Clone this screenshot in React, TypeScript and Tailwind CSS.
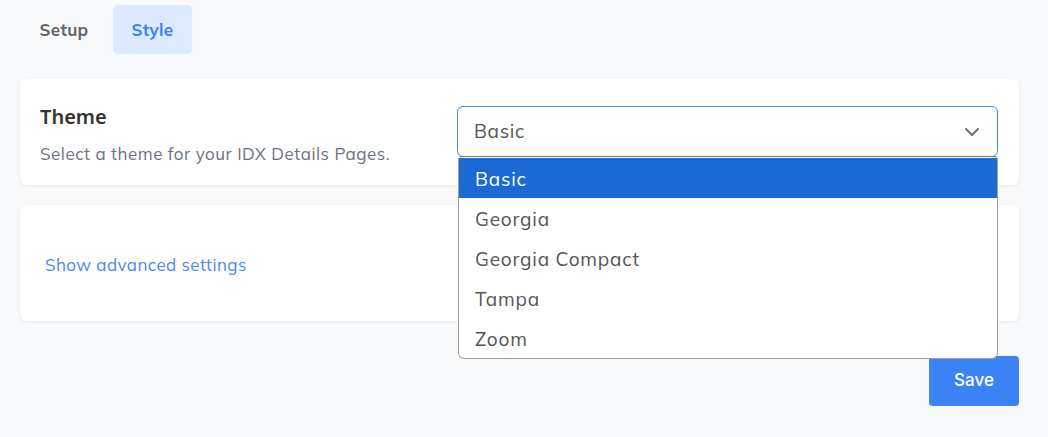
import React from "react";

const muli = { fontFamily: '"Mulish", "Muli", "Open Sans", sans-serif' };

export default function App() {
  const options = ["Basic", "Georgia", "Georgia Compact", "Tampa", "Zoom"];
  return (
    <div className="w-[1048px] h-[437px] bg-[#f8f9fb] overflow-hidden" style={muli}>
      <div className="flex gap-[5px] pl-[20px] pt-[5px]">
        <div className="h-[49px] w-[88px] flex items-center justify-center text-[17px] font-bold text-[#5f6368] tracking-[0.3px] rounded-[5px]">
          Setup
        </div>
        <div className="h-[49px] w-[79px] flex items-center justify-center text-[17px] font-bold text-[#3b82f6] tracking-[0.3px] bg-[#dbeafe] rounded-[5px]">
          Style
        </div>
      </div>

      <div className="ml-[20px] mr-[29px] mt-[25px] bg-white rounded-[6px] shadow-[0_1px_3px_rgba(0,0,0,0.08)] h-[106px] flex pl-[20px] pr-[21px] pt-[27px]">
        <div className="flex-1">
          <div className="text-[20px] font-semibold text-[#333333] leading-[24px] -mt-[1px]" style={{ fontFamily: '"Noto Sans", sans-serif' }}>
            Theme
          </div>
          <div className="mt-[14px] text-[17px] text-[#6b7280] leading-[22px] tracking-[0.5px]">
            Select a theme for your IDX Details Pages.
          </div>
        </div>
        <div className="relative w-[541px]">
          <div className="h-[51px] border border-[#4a90c8] rounded-[6px] flex items-center justify-between pl-[16px] pr-[17px] text-[19px] text-[#555555] tracking-[0.7px]">
            <span>Basic</span>
            <svg width="16" height="10" viewBox="0 0 16 10" fill="none">
              <path d="M2 2l6 6 6-6" stroke="#6b7280" strokeWidth="2" strokeLinecap="round" strokeLinejoin="round" />
            </svg>
          </div>
          <div className="absolute left-[1px] top-[50px] w-[540px] bg-white border border-[#a0a0a0] border-t-[#777777] rounded-b-[6px] rounded-t-[4px] overflow-hidden z-10 pt-[1px]">
            {options.map((o, i) => (
              <div
                key={o}
                className={
                  i === 0
                    ? "h-[40px] flex items-center pl-[16px] pt-[2px] text-[19px] tracking-[0.8px] bg-[#1a69d4] text-white"
                    : "h-[40px] flex items-center pl-[16px] pt-[2px] text-[19px] tracking-[0.8px] text-[#555555]"
                }
              >
                {o}
              </div>
            ))}
          </div>
        </div>
      </div>

      <div className="ml-[20px] mr-[29px] mt-[20px] bg-white rounded-[6px] shadow-[0_1px_3px_rgba(0,0,0,0.08)] h-[116px] flex items-center pl-[25px] pt-[3px]">
        <span className="text-[17px] text-[#4f86f7] tracking-[0.4px]">Show advanced settings</span>
      </div>

      <div className="flex justify-end pr-[29px] mt-[35px]">
        <button className="w-[90px] h-[50px] bg-[#3b82f6] rounded-[4px] text-white text-[17px] font-medium" style={{ fontFamily: '"Inter", sans-serif' }}>
          Save
        </button>
      </div>
    </div>
  );
}
